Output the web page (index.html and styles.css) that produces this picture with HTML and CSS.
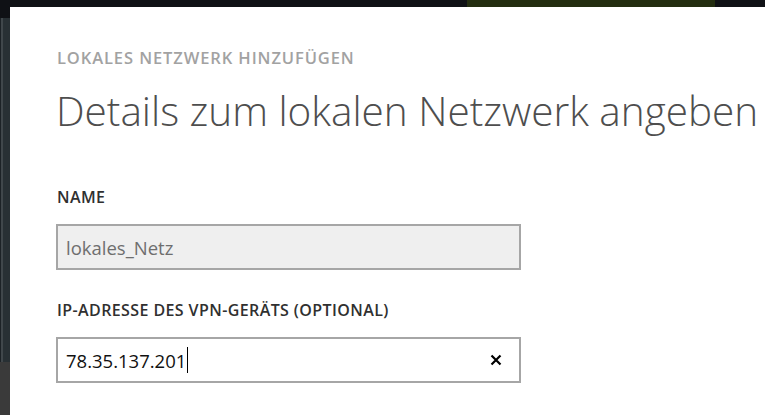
FILE: index.html
```html
<!DOCTYPE html>
<html lang="de">
<head>
    <meta charset="UTF-8">
    <meta name="viewport" content="width=device-width, initial-scale=1.0">
    <title>Lokales Netzwerk hinzufügen</title>
    <link rel="stylesheet" href="styles.css">
</head>
<body>
    <div class="topbar">
        <div class="topbar-active"></div>
    </div>

    <div class="main">
        <div class="side">
            <div class="side-nav"></div>
        </div>

        <div class="panel">
            <div class="subtitle">LOKALES NETZWERK HINZUFÜGEN</div>
            <h1 class="heading">Details zum lokalen Netzwerk angeben</h1>

            <div class="field">
                <div class="label">NAME</div>
                <div class="box box-disabled">
                    <span class="value">lokales_Netz</span>
                </div>
            </div>

            <div class="field">
                <div class="label">IP-ADRESSE DES VPN-GERÄTS (OPTIONAL)</div>
                <div class="box">
                    <span class="value value-dark">78.35.137.201</span><span class="caret"></span>
                    <span class="clear">
                        <svg width="12" height="12" viewBox="0 0 12 12">
                            <path d="M1.5 1.5 L10.5 10.5 M10.5 1.5 L1.5 10.5" stroke="#000" stroke-width="2.2" fill="none"/>
                        </svg>
                    </span>
                </div>
            </div>
        </div>
    </div>
</body>
</html>
```

FILE: styles.css
```css
body {
    margin: 0;
    background-color: #0f1115;
    font-family: "Open Sans", "Noto Sans", sans-serif;
    height: 415px;
    overflow: hidden;
}

.topbar {
    height: 7px;
}

.topbar-active {
    margin-left: 467px;
    width: 248px;
    height: 7px;
    background-color: #232d10;
}

.main {
    display: flex;
    height: 408px;
}

.side {
    width: 10px;
    box-sizing: border-box;
    border-top: 11px solid #0f1115;
    background-color: #3a3a3a;
}

.side-nav {
    height: 344px;
    background-color: #283034;
    border-left: 1px solid #1c2226;
    box-shadow: inset 2px 0 0 #40474b;
}

.panel {
    flex: 1;
    background-color: #fff;
    padding: 41px 0 0 46px;
}

.subtitle {
    font-size: 16.5px;
    letter-spacing: 0.9px;
    line-height: 20px;
    font-weight: 600;
    color: #a2a2a2;
    padding-left: 1px;
}

.heading {
    margin: 19px 0 0 0;
    font-size: 40.5px;
    line-height: 48px;
    font-weight: 300;
    color: #4e4e4e;
    white-space: nowrap;
}

.field {
    margin-top: 52px;
}

.field + .field {
    margin-top: 30px;
}

.label {
    font-size: 16px;
    letter-spacing: 0.4px;
    line-height: 20px;
    font-weight: 600;
    color: #303030;
    padding-left: 1px;
}

.box {
    margin-top: 17px;
    width: 465px;
    height: 46px;
    box-sizing: border-box;
    border: 2px solid #a6a6a6;
    background-color: #fff;
    display: flex;
    align-items: center;
    padding-left: 8px;
}

.box-disabled {
    background-color: #efefef;
}

.value {
    font-size: 18.5px;
    color: #6e6e6e;
}

.value-dark {
    color: #111;
}

.caret {
    width: 1px;
    height: 26px;
    background-color: #000;
    margin-left: 1px;
}

.clear {
    margin-left: auto;
    margin-right: 17px;
    display: flex;
}
```
